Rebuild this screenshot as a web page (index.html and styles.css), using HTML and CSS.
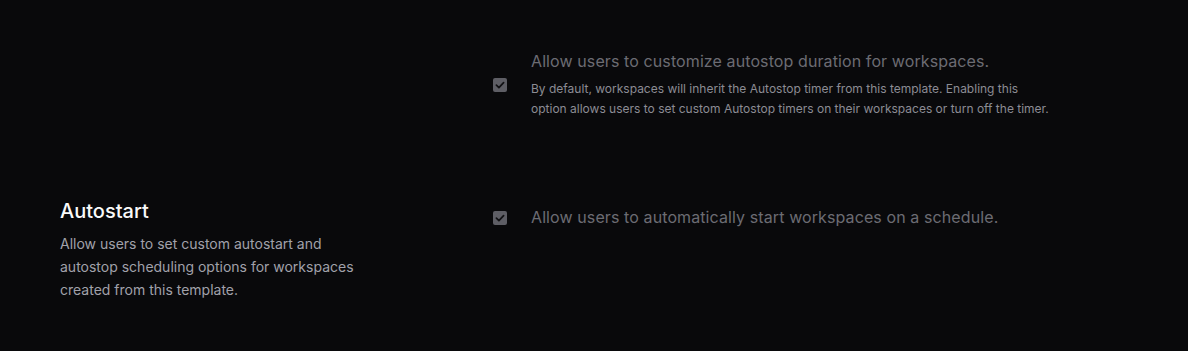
FILE: index.html
```html
<!DOCTYPE html>
<html lang="en">

<head>
    <meta charset="utf-8">
    <meta name="viewport" content="width=device-width, initial-scale=1.0">
    <title>Template schedule</title>
    <link rel="stylesheet" href="styles.css">
</head>

<body>
    <section class="indstilling forste">
        <div class="beskrivelse"></div>
        <div class="felter">
            <label class="valg">
                <span class="boks">
                    <svg viewBox="0 0 14 14" width="14" height="14">
                        <path d="M3.4 7.2 L5.9 9.6 L10.6 4.6" fill="none" stroke="#111114" stroke-width="1.7" stroke-linecap="round" stroke-linejoin="round"/>
                    </svg>
                </span>
                <span class="tekst">
                    <span class="etiket">Allow users to customize autostop duration for workspaces.</span>
                    <span class="hjaelp">By default, workspaces will inherit the Autostop timer from this template. Enabling this option allows users to set custom Autostop timers on their workspaces or turn off the timer.</span>
                </span>
            </label>
        </div>
    </section>

    <section class="indstilling">
        <div class="beskrivelse">
            <h2>Autostart</h2>
            <p>Allow users to set custom autostart and autostop scheduling options for workspaces created from this template.</p>
        </div>
        <div class="felter anden">
            <label class="valg">
                <span class="boks">
                    <svg viewBox="0 0 14 14" width="14" height="14">
                        <path d="M3.4 7.2 L5.9 9.6 L10.6 4.6" fill="none" stroke="#111114" stroke-width="1.7" stroke-linecap="round" stroke-linejoin="round"/>
                    </svg>
                </span>
                <span class="tekst">
                    <span class="etiket">Allow users to automatically start workspaces on a schedule.</span>
                </span>
            </label>
        </div>
    </section>
</body>

</html>
```
FILE: styles.css
```css
* {
    box-sizing: border-box;
}

body {
    margin: 0;
    background-color: #09090b;
    font-family: Inter, "Noto Sans", sans-serif;
    color: #fafafa;
    padding-top: 49px;
    height: 351px;
    overflow: hidden;
}

.indstilling {
    display: flex;
    gap: 121px;
    padding-left: 60px;
}

.forste {
    margin-bottom: 78px;
}

.beskrivelse {
    width: 310px;
    flex-shrink: 0;
}

.beskrivelse h2 {
    margin: 0;
    font-size: 20px;
    font-weight: 500;
    line-height: 28px;
    color: #fafafa;
}

.beskrivelse p {
    margin: 7px 0 0;
    font-size: 14px;
    line-height: 23px;
    color: #a1a1aa;
}

.felter {
    width: 560px;
}

.anden {
    padding-top: 8px;
}

.valg {
    display: flex;
    align-items: center;
    gap: 24px;
}

.boks {
    width: 14px;
    height: 14px;
    flex-shrink: 0;
    margin-left: 2px;
    margin-top: 2px;
    border-radius: 2px;
    background-color: #5e5e65;
    display: flex;
}

.tekst {
    display: flex;
    flex-direction: column;
    width: 522px;
}

.etiket {
    font-size: 16px;
    line-height: 24px;
    letter-spacing: 0.1px;
    color: #6c6c73;
}

.hjaelp {
    margin-top: 6px;
    font-size: 12px;
    line-height: 20px;
    color: #8c8c94;
}
```
